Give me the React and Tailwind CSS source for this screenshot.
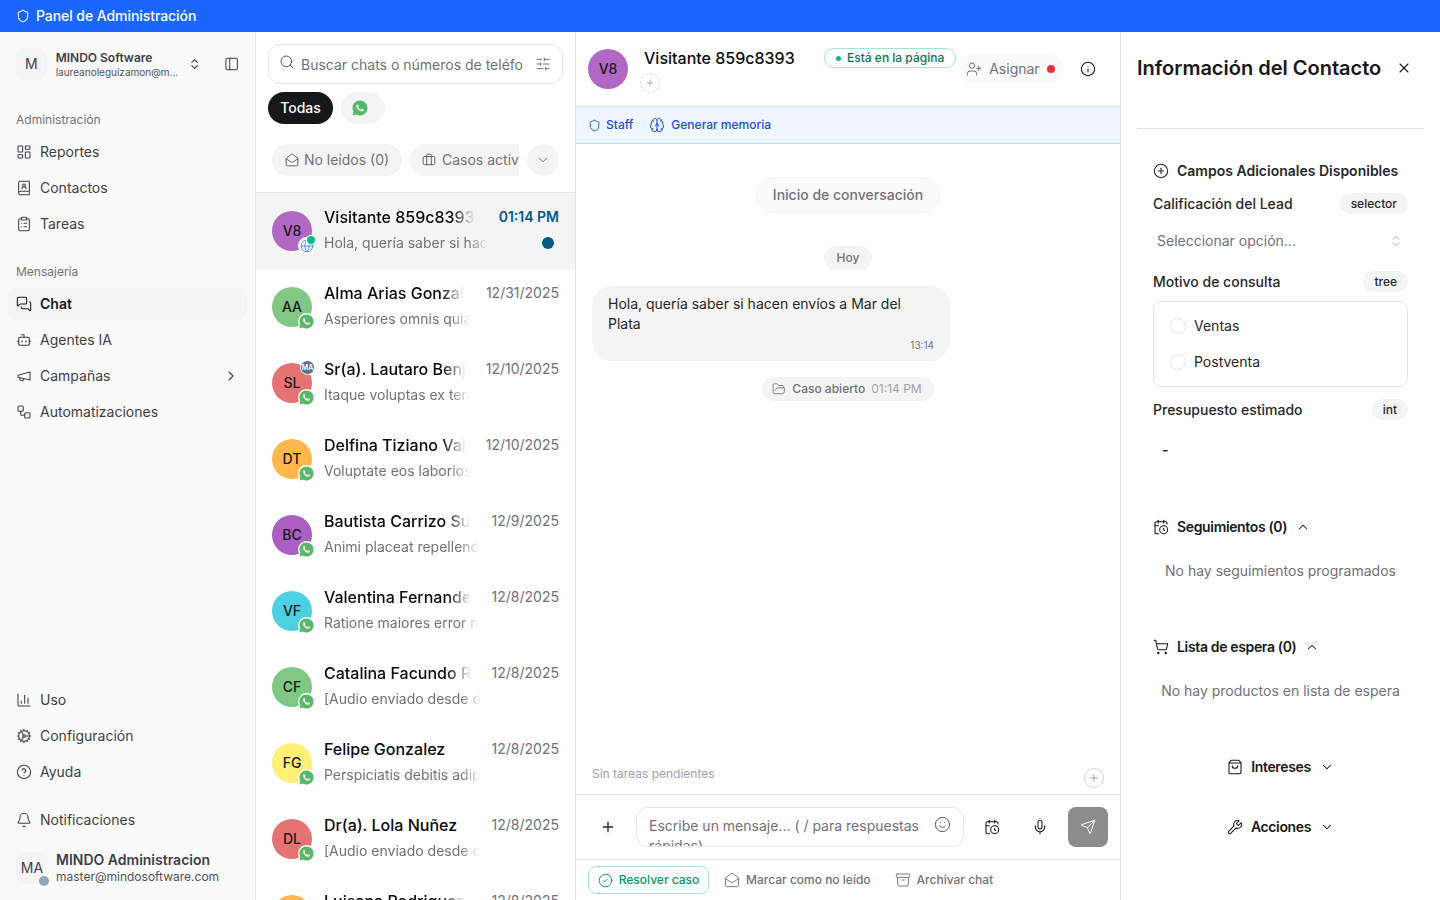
import {
  Archive, BookUser, Bot, Brain, Briefcase, CalendarClock, ChartColumn, ChevronDown, ChevronRight, ChevronUp,
  ChevronsUpDown, CircleCheck, CircleHelp, CirclePlus, ClipboardList, Cog, FolderOpen, Globe, Info, LayoutDashboard,
  MailOpen, MessagesSquare, Mic, PanelLeft, Plus, Search, Send, Shield, ShoppingBag, ShoppingCart,
  SlidersHorizontal, Smile, UserPlus, Workflow, Wrench, X,
} from 'lucide-react';
import { RiWhatsappFill } from 'react-icons/ri';

const chats = [
  { initials: 'AA', color: 'bg-[#81c784]', name: 'Alma Arias Gonzal', preview: 'Asperiores omnis quia', date: '12/31/2025' },
  { initials: 'SL', color: 'bg-[#e57373]', name: 'Sr(a). Lautaro Benj', preview: 'Itaque voluptas ex ten', date: '12/10/2025', agent: true },
  { initials: 'DT', color: 'bg-[#ffb74d]', name: 'Delfina Tiziano Val', preview: 'Voluptate eos laborios', date: '12/10/2025' },
  { initials: 'BC', color: 'bg-[#ab5fc0]', name: 'Bautista Carrizo Su', preview: 'Animi placeat repellend', date: '12/9/2025' },
  { initials: 'VF', color: 'bg-[#4dd0e1]', name: 'Valentina Fernande', preview: 'Ratione maiores error n', date: '12/8/2025' },
  { initials: 'CF', color: 'bg-[#81c784]', name: 'Catalina Facundo R', preview: '[Audio enviado desde d', date: '12/8/2025' },
  { initials: 'FG', color: 'bg-[#fff176]', name: 'Felipe Gonzalez', preview: 'Perspiciatis debitis adip', date: '12/8/2025', full: true },
  { initials: 'DL', color: 'bg-[#e57373]', name: 'Dr(a). Lola Nuñez', preview: '[Audio enviado desde c', date: '12/8/2025', full: true },
  { initials: 'LR', color: 'bg-[#ffb74d]', name: 'Luisana Rodriguez', preview: 'Dolorem quia', date: '12/8/2025' },
];

function NavItem({ icon: Icon, label, active, chevron }) {
  return (
    <div className={`flex h-8 items-center gap-2 rounded-lg px-2 text-sm ${active ? 'bg-[#f4f4f5] font-semibold text-[#18181b]' : 'text-[#3f3f46]'}`}>
      <Icon size={16} strokeWidth={1.6} />
      <span className="flex-1">{label}</span>
      {chevron && <ChevronRight size={16} strokeWidth={1.6} />}
    </div>
  );
}

function BellIcon(props) {
  return (
    <svg width={16} height={16} viewBox="0 0 24 24" fill="none" stroke="currentColor" strokeWidth={1.6} strokeLinecap="round" strokeLinejoin="round" {...props}>
      <path d="M10.3 21a2 2 0 0 0 3.4 0" />
      <path d="M3.3 15.3A1 1 0 0 0 4 17h16a1 1 0 0 0 .7-1.7C19.4 14 18 12.500 18 8A6 6 0 0 0 6 8c0 4.500-1.400 6-2.700 7.300" />
    </svg>
  );
}

// old lucide megaphone, the current one in the package has a different shape
function MegaphoneIcon(props) {
  return (
    <svg width={16} height={16} viewBox="0 0 24 24" fill="none" stroke="currentColor" strokeWidth={1.6} strokeLinecap="round" strokeLinejoin="round" {...props}>
      <path d="m3 11 18-5v12L3 14v-3z" />
      <path d="M11.6 16.800a3 3 0 1 1-5.800-1.600" />
    </svg>
  );
}

function Sidebar() {
  return (
    <aside className="flex h-full w-[256px] shrink-0 flex-col border-r border-[#e4e4e7] bg-[#fafafa]">
      <div className="flex items-center gap-2 px-4 pt-4">
        <div className="flex size-8 items-center justify-center rounded-lg bg-[#f4f4f5] text-sm text-[#3f3f46]">M</div>
        <div className="ml-[1px] mt-[2px] w-[126px] min-w-0">
          <div className="whitespace-nowrap text-xs font-semibold leading-[14px] text-[#3f3f46]">MINDO Software</div>
          <div className="whitespace-nowrap text-[10px] leading-[14px] text-[#52525b]">laureanoleguizamon@m...</div>
        </div>
        <ChevronsUpDown size={14} className="ml-[4px] text-[#3f3f46]" />
        <PanelLeft size={16} strokeWidth={1.6} className="ml-[14px] text-[#3f3f46]" />
      </div>

      <div className="px-2 pt-[31px]">
        <div className="flex h-[18px] items-center px-2 text-xs text-[#71717a]">Administración</div>
        <div className="mt-[7px] flex flex-col gap-1">
          <NavItem icon={LayoutDashboard} label="Reportes" />
          <NavItem icon={BookUser} label="Contactos" />
          <NavItem icon={ClipboardList} label="Tareas" />
        </div>
        <div className="mt-[23px] flex h-[18px] items-center px-2 text-xs text-[#71717a]">Mensajería</div>
        <div className="mt-[7px] flex flex-col gap-1">
          <NavItem icon={MessagesSquare} label="Chat" active />
          <NavItem icon={Bot} label="Agentes IA" />
          <NavItem icon={MegaphoneIcon} label="Campañas" chevron />
          <NavItem icon={Workflow} label="Automatizaciones" />
        </div>
      </div>

      <div className="mt-auto px-2">
        <div className="flex flex-col gap-1">
          <NavItem icon={ChartColumn} label="Uso" />
          <NavItem icon={Cog} label="Configuración" />
          <NavItem icon={CircleHelp} label="Ayuda" />
        </div>
        <div className="mt-4">
          <NavItem icon={BellIcon} label="Notificaciones" />
        </div>
        <div className="flex items-center gap-2 px-2 pb-[15px] pt-[15px]">
          <div className="relative flex size-8 items-center justify-center rounded-lg bg-[#f4f4f5] text-sm text-[#3f3f46]">
            MA
            <span className="absolute -bottom-[2px] -right-[1px] size-[10px] rounded-full bg-[#94a3b8]" />
          </div>
          <div className="min-w-0">
            <div className="whitespace-nowrap text-sm font-semibold leading-[17px] text-[#3f3f46]">MINDO Administracion</div>
            <div className="whitespace-nowrap text-xs leading-[17px] text-[#52525b]">master@mindosoftware.com</div>
          </div>
        </div>
      </div>
    </aside>
  );
}

function WhatsappBadge() {
  return (
    <span className="absolute -bottom-[3px] -right-[3px] flex size-[17px] items-center justify-center rounded-full bg-white">
      <RiWhatsappFill size={17} className="text-[#55b968]" />
    </span>
  );
}

function ChatRow({ chat }) {
  return (
    <div className="flex h-[76px] shrink-0 px-4 pt-[17px]">
      <div className={`relative flex size-10 shrink-0 items-center justify-center rounded-full text-sm font-medium text-[#18181b] ${chat.color}`}>
        {chat.initials}
        <WhatsappBadge />
        {chat.agent && (
          <span className="absolute -right-[3px] -top-[3px] flex size-[15px] items-center justify-center rounded-full border border-white bg-[#5b7190] text-[7px] font-semibold text-white">MA</span>
        )}
      </div>
      <div className="ml-3 min-w-0 flex-1">
        <div className="-mt-[6px] flex items-center justify-between">
          <div className={`w-fit whitespace-nowrap text-base font-medium leading-6 text-[#0a0a0a] ${chat.full ? '' : '[mask-image:linear-gradient(to_right,black_calc(100%-24px),transparent)]'}`}>
            {chat.name}
          </div>
          <div className="shrink-0 text-sm text-[#71717a]">{chat.date}</div>
        </div>
        <div className="mt-[4px] w-fit whitespace-nowrap text-sm leading-5 text-[#71717a] [mask-image:linear-gradient(to_right,black_calc(100%-20px),transparent)]">
          {chat.preview}
        </div>
      </div>
    </div>
  );
}

function ChatList() {
  return (
    <section className="flex h-full w-[320px] shrink-0 flex-col border-r border-[#e4e4e7] bg-white">
      <div className="px-3 pt-3">
        <div className="flex h-10 items-center rounded-xl border border-[#e4e4e7] pl-[10px] pr-[11px]">
          <Search size={16} strokeWidth={1.5} className="-translate-y-[2px] text-[#52525b]" />
          <span className="ml-[6px] flex-1 translate-y-[1px] whitespace-nowrap text-sm text-[#71717a]">Buscar chats o números de teléfo</span>
          <SlidersHorizontal size={16} strokeWidth={1.5} className="ml-3 text-[#71717a]" />
        </div>
        <div className="mt-2 flex gap-2">
          <div className="flex h-8 w-[65px] items-center justify-center rounded-full bg-[#18181b] text-sm font-medium text-white">Todas</div>
          <div className="flex h-8 w-11 items-center rounded-full bg-[#f4f4f5] pl-[10px]">
            <RiWhatsappFill size={18} className="text-[#55b968]" />
          </div>
        </div>
      </div>
      <div className="flex items-center border-b border-[#e4e4e7] pb-4 pl-4 pr-4 pt-5">
        <div className="flex h-8 w-[130px] shrink-0 items-center justify-center gap-[5px] rounded-full bg-[#f4f4f5] text-sm text-[#71717a]">
          <MailOpen size={14} strokeWidth={1.5} className="text-[#52525b]" />
          No leídos (0)
        </div>
        <div className="ml-2 flex h-8 w-[109px] shrink-0 items-center gap-[6px] whitespace-nowrap rounded-l-full bg-[#f4f4f5] pl-3 text-sm text-[#71717a]">
          <Briefcase size={14} strokeWidth={1.5} className="shrink-0 text-[#52525b]" />
          Casos activ
        </div>
        <div className="ml-2 flex size-8 shrink-0 items-center justify-center rounded-full bg-[#f4f4f5]">
          <ChevronDown size={14} strokeWidth={1.5} className="text-[#52525b]" />
        </div>
      </div>
      <div className="flex-1 overflow-hidden">
        <div className="flex h-[77px] bg-[#f4f4f5] px-4 pt-[18px]">
          <div className="relative flex size-10 shrink-0 items-center justify-center rounded-full bg-[#b068c4] text-sm font-medium text-[#18181b]">
            V8
            <span className="absolute -bottom-[3px] -right-[3px] flex size-[17px] items-center justify-center rounded-full bg-white">
              <Globe size={14} strokeWidth={1.5} className="text-[#3b82f6]" />
            </span>
            <span className="absolute bottom-[7px] -right-[3px] size-2 rounded-full bg-[#10b981] ring-1 ring-white" />
          </div>
          <div className="ml-3 min-w-0 flex-1">
            <div className="-mt-[6px] flex items-center justify-between">
              <div className="w-fit whitespace-nowrap text-base font-medium leading-6 text-[#0a0a0a] [mask-image:linear-gradient(to_right,black_calc(100%-24px),transparent)]">
                Visitante 859c8393
              </div>
              <div className="shrink-0 text-sm font-semibold text-[#075985]">01:14 PM</div>
            </div>
            <div className="mt-[4px] flex items-center justify-between">
              <div className="w-fit whitespace-nowrap text-sm leading-5 text-[#71717a] [mask-image:linear-gradient(to_right,black_calc(100%-20px),transparent)]">
                Hola, quería saber si hac
              </div>
              <span className="mr-[5px] size-3 rounded-full bg-[#075985]" />
            </div>
          </div>
        </div>
        {chats.map((chat) => (
          <ChatRow key={chat.initials + chat.name} chat={chat} />
        ))}
      </div>
    </section>
  );
}

function ChatPanel() {
  return (
    <section className="flex h-full min-w-0 flex-1 flex-col bg-white">
      <div className="flex h-[75px] shrink-0 items-start border-b border-[#e4e4e7] px-3 pt-[17px]">
        <div className="flex size-10 shrink-0 items-center justify-center rounded-full bg-[#b068c4] text-sm font-medium text-[#18181b]">V8</div>
        <div className="ml-4 w-[180px] shrink-0">
          <div className="-mt-[3px] text-base font-medium leading-6 text-[#0a0a0a]">Visitante 859c8393</div>
          <div className="-ml-[4px] mt-[3px] flex size-5 items-center justify-center rounded-full border border-dashed border-[#d4d4d8] text-[#a1a1aa]">
            <Plus size={10} />
          </div>
        </div>
        <div className="-mt-[1px] flex h-5 items-center gap-[6px] rounded-full border border-[#a7e3cc] bg-white px-[11px] text-xs font-medium text-[#047857]">
          <span className="size-[5px] rounded-full bg-[#10b981]" />
          Está en la página
        </div>
        <div className="ml-[2px] mt-[6px] flex h-7 w-[106px] items-center gap-[7px] rounded-full bg-[#fafafa] pl-2 text-sm text-[#71717a]">
          <UserPlus size={16} strokeWidth={1.5} />
          Asignar
          <span className="size-2 rounded-full bg-[#ef2b36]" />
        </div>
        <Info size={16} strokeWidth={1.6} className="ml-[16px] mt-[12px] text-[#18181b]" />
      </div>

      <div className="flex h-[37px] shrink-0 items-center gap-4 border-b border-[#bfdbfe] bg-[#eff6ff] px-3 text-xs font-medium text-[#1d4ed8]">
        <div className="flex items-center gap-[5px]">
          <Shield size={13} strokeWidth={1.6} />
          Staff
        </div>
        <div className="flex items-center gap-[6px]">
          <Brain size={16} strokeWidth={1.5} />
          Generar memoria
        </div>
      </div>

      <div className="flex min-h-0 flex-1 flex-col px-4">
        <div className="mt-[33px] flex justify-center">
          <div className="flex h-9 w-[184px] items-center justify-center rounded-full border border-[#f4f4f5] bg-[#fafafa] text-sm font-medium text-[#71717a]">
            Inicio de conversación
          </div>
        </div>
        <div className="mt-[33px] flex justify-center">
          <div className="flex h-6 w-12 items-center justify-center rounded-full bg-[#f4f4f5] text-xs font-medium text-[#71717a]">Hoy</div>
        </div>
        <div className="mt-4 w-[358px] rounded-[20px] bg-[#f4f4f5] px-4 pb-2 pt-2">
          <p className="text-sm leading-5 text-[#27272a]">Hola, quería saber si hacen envíos a Mar del Plata</p>
          <div className="mt-[3px] text-right text-[10px] leading-4 text-[#71717a]">13:14</div>
        </div>
        <div className="mt-4 flex justify-center">
          <div className="flex h-6 w-[172px] items-center justify-center gap-[6px] rounded-full bg-[#f4f4f5] pr-[2px] text-xs font-medium text-[#71717a]">
            <FolderOpen size={14} strokeWidth={1.5} />
            Caso abierto
            <span className="font-normal text-[#a1a1aa]">01:14 PM</span>
          </div>
        </div>
        <div className="mt-auto flex items-start justify-between pb-[6px]">
          <span className="mt-[3px] text-xs text-[#a1a1aa]">Sin tareas pendientes</span>
          <span className="mt-[5px] flex size-5 items-center justify-center rounded-full border border-[#d4d4d8] text-[#a1a1aa]">
            <Plus size={12} />
          </span>
        </div>
      </div>

      <div className="flex h-[66px] shrink-0 items-center border-y border-[#e4e4e7] px-3 py-3">
        <div className="flex size-10 shrink-0 items-center justify-center">
          <Plus size={16} className="text-[#27272a]" />
        </div>
        <div className="relative ml-2 h-10 w-[328px] shrink-0 overflow-hidden rounded-xl border border-[#e4e4e7] pl-3 pr-10 pt-2 text-sm leading-5 text-[#71717a]">
          Escribe un mensaje... ( / para respuestas rápidas)
          <Smile size={17} strokeWidth={1.4} className="absolute right-[12px] top-[8px] text-[#52525b]" />
        </div>
        <CalendarClock size={16} strokeWidth={1.6} className="ml-5 shrink-0 text-[#18181b]" />
        <Mic size={16} strokeWidth={1.6} className="ml-[32px] shrink-0 text-[#18181b]" />
        <div className="ml-[20px] flex size-10 shrink-0 items-center justify-center rounded-lg bg-[#8c8c8c]">
          <Send size={16} strokeWidth={1.5} className="text-white" />
        </div>
      </div>

      <div className="flex h-[40px] shrink-0 items-center px-3 text-xs font-medium text-[#71717a]">
        <div className="flex h-7 w-[121px] items-center justify-center gap-[6px] rounded-lg border border-[#a7e3cc] text-[#059669]">
          <CircleCheck size={15} strokeWidth={1.5} />
          Resolver caso
        </div>
        <div className="ml-[15px] flex items-center gap-[6px]">
          <MailOpen size={16} strokeWidth={1.4} />
          Marcar como no leído
        </div>
        <div className="ml-6 flex items-center gap-[6px]">
          <Archive size={16} strokeWidth={1.4} />
          Archivar chat
        </div>
      </div>
    </section>
  );
}

function FieldHeader({ label, tag }) {
  return (
    <div className="flex items-center justify-between">
      <span className="text-sm font-medium text-[#27272a]">{label}</span>
      <span className="flex h-[21px] items-center rounded-full bg-[#f4f4f5] px-[11px] text-xs font-medium text-[#27272a]">{tag}</span>
    </div>
  );
}

function SectionTitle({ icon: Icon, title, chevron: Chevron, className }) {
  return (
    <div className={`flex items-center gap-2 text-sm font-semibold text-[#18181b] ${className}`}>
      <Icon size={16} strokeWidth={1.6} />
      <span className="tracking-tight">{title}</span>
      <Chevron size={14} strokeWidth={1.8} className="ml-[1px]" />
    </div>
  );
}

function ContactPanel() {
  return (
    <aside className="flex h-full w-[320px] shrink-0 flex-col overflow-hidden border-l border-[#e4e4e7] bg-white">
      <div className="mx-4 flex h-[97px] shrink-0 items-start justify-between border-b border-[#e4e4e7] pt-[22px]">
        <h2 className="text-xl font-semibold leading-[28px] text-[#18181b]">Información del Contacto</h2>
        <X size={16} strokeWidth={1.6} className="mr-[12px] mt-[6px] text-[#18181b]" />
      </div>
      <div className="px-8">
        <div className="mt-[32px] flex items-center gap-2 text-sm font-semibold text-[#27272a]">
          <CirclePlus size={16} strokeWidth={1.6} />
          <span>Campos Adicionales Disponibles</span>
        </div>
        <div className="mt-[12px]">
          <FieldHeader label="Calificación del Lead" tag="selector" />
        </div>
        <div className="mt-[17px] flex h-5 items-center justify-between pl-1 pr-[5px] text-sm text-[#71717a]">
          Seleccionar opción...
          <ChevronsUpDown size={14} strokeWidth={1.4} className="text-[#a1a1aa]" />
        </div>
        <div className="mt-[20px]">
          <FieldHeader label="Motivo de consulta" tag="tree" />
        </div>
        <div className="mt-[9px] flex h-[86px] flex-col justify-center gap-4 rounded-lg border border-[#e4e4e7] pl-4 text-sm text-[#27272a]">
          <div className="flex h-5 items-center gap-2">
            <span className="size-4 rounded-full border border-[#e4e4e7]" />
            Ventas
          </div>
          <div className="flex h-5 items-center gap-2">
            <span className="size-4 rounded-full border border-[#e4e4e7]" />
            Postventa
          </div>
        </div>
        <div className="mt-[12px]">
          <FieldHeader label="Presupuesto estimado" tag="int" />
        </div>
        <div className="mt-[20px] h-5 pl-[9px] text-sm font-semibold leading-5 text-[#27272a]">-</div>

        <SectionTitle icon={CalendarClock} title="Seguimientos (0)" chevron={ChevronUp} className="mt-[57px]" />
        <p className="mt-[24px] text-center text-sm text-[#71717a]">No hay seguimientos programados</p>

        <SectionTitle icon={ShoppingCart} title="Lista de espera (0)" chevron={ChevronUp} className="mt-[56px]" />
        <p className="mt-[24px] text-center text-sm text-[#71717a]">No hay productos en lista de espera</p>

        <div className="mt-[56px] flex justify-center">
          <SectionTitle icon={ShoppingBag} title="Intereses" chevron={ChevronDown} />
        </div>
        <div className="mt-[40px] flex justify-center">
          <SectionTitle icon={Wrench} title="Acciones" chevron={ChevronDown} />
        </div>
      </div>
    </aside>
  );
}

export default function App() {
  return (
    <div className="flex h-screen w-full flex-col overflow-hidden bg-white font-['Inter',sans-serif] antialiased">
      <header className="flex h-8 shrink-0 items-center gap-2 bg-[#1a66ff] px-4 text-sm font-medium text-white">
        <Shield size={14} strokeWidth={1.8} />
        <span className="ml-[-2px] tracking-[-0.005em]">Panel de Administración</span>
      </header>
      <div className="flex min-h-0 flex-1">
        <Sidebar />
        <ChatList />
        <ChatPanel />
        <ContactPanel />
      </div>
    </div>
  );
}
